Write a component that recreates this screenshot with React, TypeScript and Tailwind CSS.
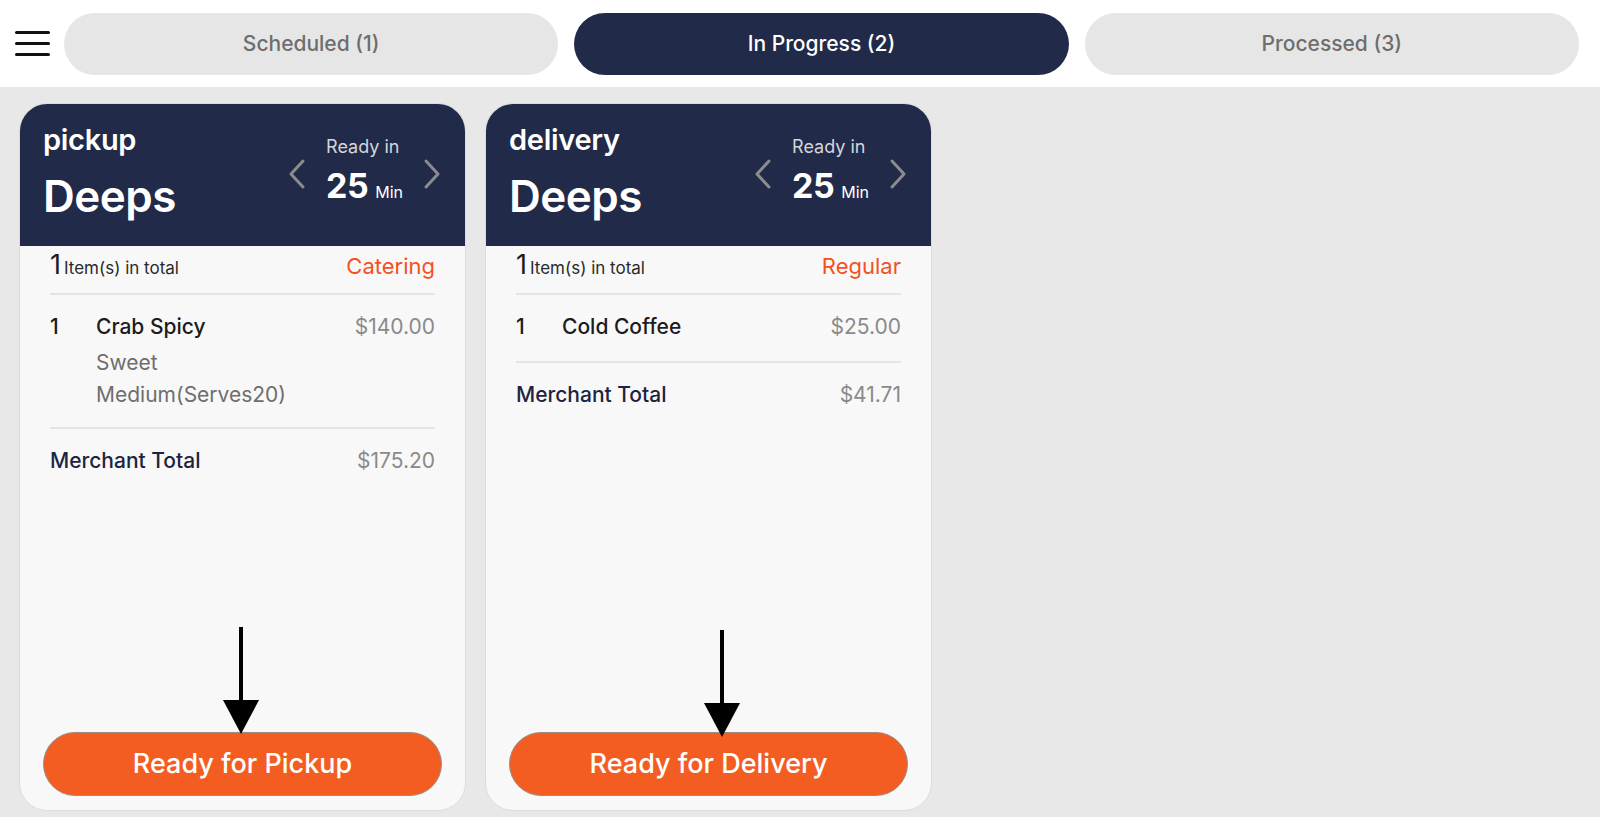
import React from "react";

const font = { fontFamily: "Inter, Lato, 'Noto Sans', sans-serif" };

function Chevron({ dir }: { dir: "left" | "right" }) {
  return (
    <svg width="18" height="32" viewBox="0 0 18 32" fill="none">
      {dir === "left" ? (
        <path d="M15 3 L3 16 L15 29" stroke="#8c8c8c" strokeWidth="3" strokeLinecap="round" strokeLinejoin="round" />
      ) : (
        <path d="M3 3 L15 16 L3 29" stroke="#8c8c8c" strokeWidth="3" strokeLinecap="round" strokeLinejoin="round" />
      )}
    </svg>
  );
}

function Arrow() {
  return (
    <svg width="36" height="108" viewBox="0 0 36 108">
      <rect x="16" y="0" width="4" height="76" fill="#000" />
      <polygon points="0,73 36,73 18,107" fill="#000" />
    </svg>
  );
}

type Item = { qty: string; name: string; price: string; subs: string[] };

function Card({
  type,
  tag,
  items,
  total,
  button,
  arrowX,
  arrowY,
}: {
  type: string;
  tag: string;
  items: Item[];
  total: string;
  button: string;
  arrowX: number;
  arrowY: number;
}) {
  return (
    <div className="relative w-[447px] h-[708px] rounded-[28px] border border-[#dcdcdc] bg-[#f8f8f8] overflow-hidden flex flex-col">
      <div className="h-[142px] bg-[#212a48] flex justify-between items-start pl-[23px] pr-[24px]">
        <div className="pt-[18px] text-white">
          <div className="text-[29px] leading-[36px] font-semibold tracking-[-0.3px]">{type}</div>
          <div className="mt-[12px] text-[44px] leading-[52px] font-semibold tracking-[-0.5px]">Deeps</div>
        </div>
        <div className="mt-[31px] flex items-center">
          <Chevron dir="left" />
          <div className="mx-[20px] flex flex-col">
            <div className="text-[18px] leading-[24px] text-[#d4d6dc]">Ready in</div>
            <div className="mt-[7px] leading-[40px] text-white flex items-baseline">
              <span className="text-[34px] font-bold tracking-[-0.5px]">25</span>
              <span className="ml-[7px] text-[16px]">Min</span>
            </div>
          </div>
          <Chevron dir="right" />
        </div>
      </div>
      <div className="flex-1 px-[30px] flex flex-col">
        <div className="pt-[3px] pb-[9px] flex items-baseline justify-between leading-[32px]">
          <div className="flex items-baseline text-[#1c1c1c]">
            <span className="text-[27px]">1</span>
            <span className="ml-[3px] text-[17px] text-[#2a2a2a]">Item(s) in total</span>
          </div>
          <span className="text-[22px] text-[#f4511e]">{tag}</span>
        </div>
        <div className="h-[2px] bg-[#e4e4e4]" />
        {items.map((it, i) => (
          <div key={i} className={`pt-[16px] flex text-[21px] leading-[32px] ${it.subs.length ? "pb-[16px]" : "pb-[18px]"}`}>
            <div className="w-[46px] text-[#1c1c1c] font-medium">{it.qty}</div>
            <div className="flex-1">
              <div className="text-[#1c1c1c] font-medium">{it.name}</div>
              {it.subs.map((s, j) => (
                <div key={j} className={`text-[#6e6e6e] ${j === 0 ? "mt-[4px]" : ""}`}>{s}</div>
              ))}
            </div>
            <div className="text-[#8a8a8a]">{it.price}</div>
          </div>
        ))}
        <div className="h-[2px] bg-[#e4e4e4]" />
        <div className="pt-[16px] flex justify-between text-[21px] leading-[32px]">
          <span className="text-[#1d2440] font-medium">Merchant Total</span>
          <span className="text-[#8a8a8a]">{total}</span>
        </div>
      </div>
      <div className="px-[23px] pb-[14px]">
        <button className="w-full h-[64px] rounded-full bg-[#f45d22] border border-[#9c8c84] text-white text-[27px] font-medium">
          {button}
        </button>
      </div>
      <div className="absolute" style={{ left: arrowX - 18, top: arrowY }}>
        <Arrow />
      </div>
    </div>
  );
}

export default function App() {
  return (
    <div style={font} className="w-[1600px] h-[817px] bg-[#e8e8e8] overflow-hidden flex flex-col">
      <div className="h-[87px] bg-white flex items-center pl-[15px] pr-[21px]">
        <div className="w-[35px] flex flex-col gap-[8px]">
          <div className="h-[3px] bg-[#111] rounded-sm" />
          <div className="h-[3px] bg-[#111] rounded-sm" />
          <div className="h-[3px] bg-[#111] rounded-sm" />
        </div>
        <div className="ml-[14px] flex-1 flex gap-[16px]">
          <div className="flex-1 h-[62px] rounded-full bg-[#e6e6e6] flex items-center justify-center text-[21px] text-[#6e6e6e] font-medium">
            Scheduled (1)
          </div>
          <div className="flex-1 h-[62px] rounded-full bg-[#212a48] flex items-center justify-center text-[21px] text-white font-medium">
            In Progress (2)
          </div>
          <div className="flex-1 h-[62px] rounded-full bg-[#e6e6e6] flex items-center justify-center text-[21px] text-[#6e6e6e] font-medium">
            Processed (3)
          </div>
        </div>
      </div>
      <div className="pt-[16px] pl-[19px] flex gap-[19px]">
        <Card
          type="pickup"
          tag="Catering"
          items={[{ qty: "1", name: "Crab Spicy", price: "$140.00", subs: ["Sweet", "Medium(Serves20)"] }]}
          total="$175.20"
          button="Ready for Pickup"
          arrowX={221}
          arrowY={523}
        />
        <Card
          type="delivery"
          tag="Regular"
          items={[{ qty: "1", name: "Cold Coffee", price: "$25.00", subs: [] }]}
          total="$41.71"
          button="Ready for Delivery"
          arrowX={236}
          arrowY={526}
        />
      </div>
    </div>
  );
}
